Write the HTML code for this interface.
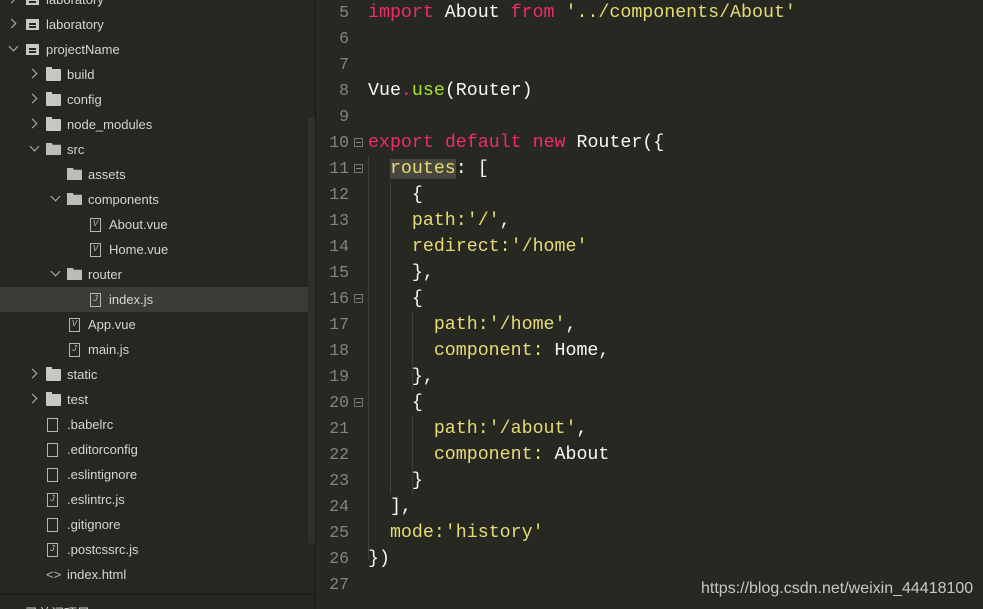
<!DOCTYPE html>
<html><head><meta charset="utf-8"><style>
*{margin:0;padding:0;box-sizing:border-box}
html,body{width:983px;height:609px;overflow:hidden}
body{background:#272822;position:relative;font-family:"Liberation Sans","Noto Sans CJK SC",sans-serif}
#side{position:absolute;left:0;top:0;width:316px;height:609px;background:#262622;border-right:1px solid #1a1a17;overflow:hidden}
.r{position:absolute;left:0;width:308px;height:25px;color:#d6d6d0;font-size:13px;line-height:25px}
.r span{position:absolute;top:0}
.sel{background:#3c3b36}
.arr{position:absolute;top:8px;width:7px;height:7px;border-right:1.5px solid #b5b5ae;border-bottom:1.5px solid #b5b5ae}
.ac{transform:rotate(-45deg)}
.ao{transform:rotate(45deg);top:6px}
.fd{position:absolute;top:7px;width:15px;height:12px;background:#c8c8c2;border-radius:1px}
.fd:before{content:"";position:absolute;left:0;top:-2px;width:6px;height:3px;background:#c8c8c2}
.fo{position:absolute;top:6px;width:15px;height:12px;background:#bdbdb6;clip-path:polygon(0 0,40% 0,45% 15%,100% 15%,100% 100%,0 100%)}
.pj{position:absolute;top:7px;width:13px;height:11px;background:#c8c8c2}
.pj:after{content:"";position:absolute;left:3px;top:4px;width:7px;height:1.5px;background:#262622;box-shadow:0 3px 0 #262622}
.fi{position:absolute;top:6px;width:11px;height:14px;border:1.3px solid #b5b5ae;font-size:9px;line-height:11px;text-align:center;color:#b5b5ae;font-family:"Liberation Mono",monospace}
#sb{position:absolute;left:308px;top:118px;width:8px;height:425px;background:#2f2f2b}
#ed{position:absolute;left:317px;top:0;right:0;bottom:0}
.l{position:absolute;left:0;height:26px;line-height:26px;font-family:"Liberation Mono","DejaVu Sans Mono",monospace;font-size:18.3px;white-space:pre;color:#f8f8f2}
.n{position:absolute;width:32px;text-align:right;color:#85857f;left:0;font-size:16.5px}
.c{position:absolute;left:51px}
.k{color:#f02a6c}.s{color:#e6db74}.g{color:#a6e22e}.p{color:#e6db74}
.fb{position:absolute;left:37px;top:8px;width:9px;height:9px;border:1px solid #777;font-size:0}
.fb:after{content:"";position:absolute;left:1px;top:3px;width:5px;height:1px;background:#888}
.gd{position:absolute;width:1px;background:#3f3f39}
</style></head><body>
<div id="side">
<div class="r" style="top:-13px"><i class="arr ac" style="left:8px"></i><i class="pj" style="left:26px"></i><span style="left:46px">laboratory</span></div>
<div class="r" style="top:12px"><i class="arr ac" style="left:8px"></i><i class="pj" style="left:26px"></i><span style="left:46px">laboratory</span></div>
<div class="r" style="top:37px"><i class="arr ao" style="left:10px"></i><i class="pj" style="left:26px"></i><span style="left:46px">projectName</span></div>
<div class="r" style="top:62px"><i class="arr ac" style="left:29px"></i><i class="fd" style="left:46px"></i><span style="left:67px">build</span></div>
<div class="r" style="top:87px"><i class="arr ac" style="left:29px"></i><i class="fd" style="left:46px"></i><span style="left:67px">config</span></div>
<div class="r" style="top:112px"><i class="arr ac" style="left:29px"></i><i class="fd" style="left:46px"></i><span style="left:67px">node_modules</span></div>
<div class="r" style="top:137px"><i class="arr ao" style="left:31px"></i><i class="fo" style="left:46px"></i><span style="left:67px">src</span></div>
<div class="r" style="top:162px"><i class="fo" style="left:67px"></i><span style="left:88px">assets</span></div>
<div class="r" style="top:187px"><i class="arr ao" style="left:52px"></i><i class="fo" style="left:67px"></i><span style="left:88px">components</span></div>
<div class="r" style="top:212px"><i class="fi" style="left:90px">V</i><span style="left:109px">About.vue</span></div>
<div class="r" style="top:237px"><i class="fi" style="left:90px">V</i><span style="left:109px">Home.vue</span></div>
<div class="r" style="top:262px"><i class="arr ao" style="left:52px"></i><i class="fo" style="left:67px"></i><span style="left:88px">router</span></div>
<div class="r sel" style="top:287px"><i class="fi" style="left:90px">J</i><span style="left:109px">index.js</span></div>
<div class="r" style="top:312px"><i class="fi" style="left:69px">V</i><span style="left:88px">App.vue</span></div>
<div class="r" style="top:337px"><i class="fi" style="left:69px">J</i><span style="left:88px">main.js</span></div>
<div class="r" style="top:362px"><i class="arr ac" style="left:29px"></i><i class="fd" style="left:46px"></i><span style="left:67px">static</span></div>
<div class="r" style="top:387px"><i class="arr ac" style="left:29px"></i><i class="fd" style="left:46px"></i><span style="left:67px">test</span></div>
<div class="r" style="top:412px"><i class="fi" style="left:47px"></i><span style="left:67px">.babelrc</span></div>
<div class="r" style="top:437px"><i class="fi" style="left:47px"></i><span style="left:67px">.editorconfig</span></div>
<div class="r" style="top:462px"><i class="fi" style="left:47px"></i><span style="left:67px">.eslintignore</span></div>
<div class="r" style="top:487px"><i class="fi" style="left:47px">J</i><span style="left:67px">.eslintrc.js</span></div>
<div class="r" style="top:512px"><i class="fi" style="left:47px"></i><span style="left:67px">.gitignore</span></div>
<div class="r" style="top:537px"><i class="fi" style="left:47px">J</i><span style="left:67px">.postcssrc.js</span></div>
<div class="r" style="top:562px"><span style="left:46px;color:#b5b5ae">&lt;&gt;</span><span style="left:67px">index.html</span></div>
<div style="position:absolute;left:0;top:594px;width:316px;height:1px;background:#1a1a17"></div>
<div class="r" style="top:601px"><span style="left:25px">已关闭项目</span></div>
<div id="sb"></div>
</div>
<div id="ed">
<div class="gd" style="left:51px;top:156px;height:404px"></div>
<div class="gd" style="left:73px;top:182px;height:312px"></div>
<div class="gd" style="left:95px;top:312px;height:78px"></div>
<div class="gd" style="left:95px;top:416px;height:78px"></div>
<div class="l" style="top:0"><span class="n">5</span><span class="c"><span class="k">import</span> About <span class="k">from</span> <span class="s">'../components/About'</span></span></div>
<div class="l" style="top:26px"><span class="n">6</span></div>
<div class="l" style="top:52px"><span class="n">7</span></div>
<div class="l" style="top:78px"><span class="n">8</span><span class="c">Vue<span class="k">.</span><span class="g">use</span>(Router)</span></div>
<div class="l" style="top:104px"><span class="n">9</span></div>
<div class="l" style="top:130px"><span class="n">10</span><i class="fb"></i><span class="c"><span class="k">export</span> <span class="k">default</span> <span class="k">new</span> Router({</span></div>
<div class="l" style="top:156px"><span class="n">11</span><i class="fb"></i><span class="c">  <span class="p" style="background:#48473f">routes</span>: [</span></div>
<div class="l" style="top:182px"><span class="n">12</span><span class="c">    {</span></div>
<div class="l" style="top:208px"><span class="n">13</span><span class="c">    <span class="p">path:'/'</span>,</span></div>
<div class="l" style="top:234px"><span class="n">14</span><span class="c">    <span class="p">redirect:'/home'</span></span></div>
<div class="l" style="top:260px"><span class="n">15</span><span class="c">    },</span></div>
<div class="l" style="top:286px"><span class="n">16</span><i class="fb"></i><span class="c">    {</span></div>
<div class="l" style="top:312px"><span class="n">17</span><span class="c">      <span class="p">path:'/home'</span>,</span></div>
<div class="l" style="top:338px"><span class="n">18</span><span class="c">      <span class="p">component:</span> Home,</span></div>
<div class="l" style="top:364px"><span class="n">19</span><span class="c">    },</span></div>
<div class="l" style="top:390px"><span class="n">20</span><i class="fb"></i><span class="c">    {</span></div>
<div class="l" style="top:416px"><span class="n">21</span><span class="c">      <span class="p">path:'/about'</span>,</span></div>
<div class="l" style="top:442px"><span class="n">22</span><span class="c">      <span class="p">component:</span> About</span></div>
<div class="l" style="top:468px"><span class="n">23</span><span class="c">    }</span></div>
<div class="l" style="top:494px"><span class="n">24</span><span class="c">  ],</span></div>
<div class="l" style="top:520px"><span class="n">25</span><span class="c">  <span class="p">mode:'history'</span></span></div>
<div class="l" style="top:546px"><span class="n">26</span><span class="c">})</span></div>
<div class="l" style="top:572px"><span class="n">27</span></div>
<div style="position:absolute;left:384px;top:580px;font-size:16px;color:#c8c8c4;font-family:'Liberation Sans',sans-serif">https://blog.csdn.net/weixin_44418100</div>
</div>
</body></html>
